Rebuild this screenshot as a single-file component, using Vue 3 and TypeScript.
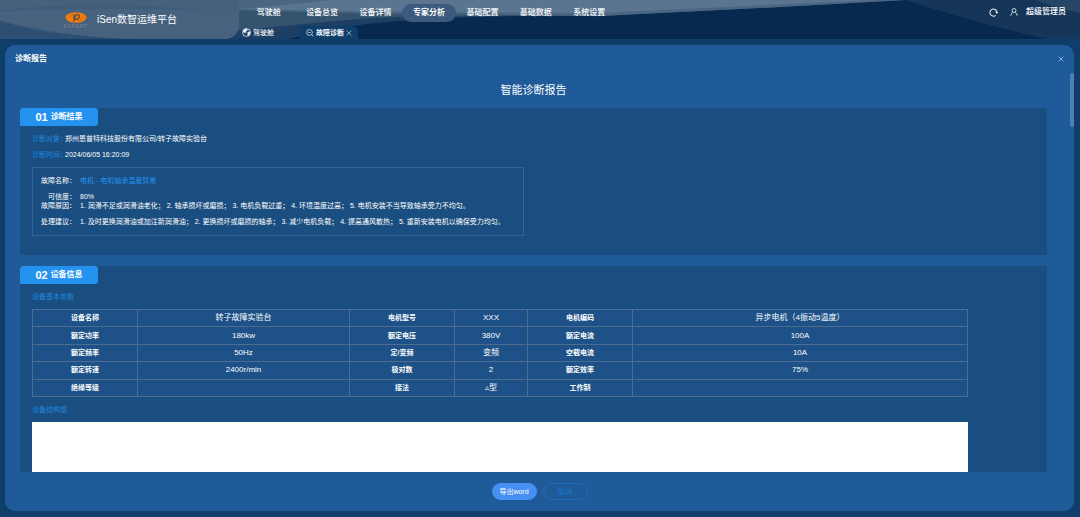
<script setup lang="ts">
import { ref } from 'vue'

const navItems: string[] = ['驾驶舱', '设备总览', '设备详情', '专家分析', '基础配置', '基础数据', '系统设置']
const activeNav = ref('专家分析')

interface Field {
  label: string
  value: string
  highlight?: boolean
  tight?: boolean
}

const summary: Field[] = [
  { label: '诊断对象：', value: '郑州恩普特科技股份有限公司/转子故障实验台' },
  { label: '诊断时间：', value: '2024/06/05 16:20:09' },
]

const faults: Field[] = [
  { label: '故障名称：', value: '电机 - 电机轴承温度异常', highlight: true },
  { label: '可信度：', value: '80%', tight: true },
  {
    label: '故障原因：',
    value: '1. 润滑不足或润滑油老化； 2. 轴承损坏或磨损； 3. 电机负载过重； 4. 环境温度过高； 5. 电机安装不当导致轴承受力不均匀。',
  },
  {
    label: '处理建议：',
    value: '1. 及时更换润滑油或加注新润滑油； 2. 更换损坏或磨损的轴承； 3. 减少电机负载； 4. 提高通风散热； 5. 重新安装电机以确保受力均匀。',
  },
]

const params: [string, string][][] = [
  [['设备名称', '转子故障实验台'], ['电机型号', 'XXX'], ['电机编码', '异步电机（4振动5温度）']],
  [['额定功率', '180kw'], ['额定电压', '380V'], ['额定电流', '100A']],
  [['额定频率', '50Hz'], ['定/变频', '变频'], ['空载电流', '10A']],
  [['额定转速', '2400r/min'], ['极对数', '2'], ['额定效率', '75%']],
  [['绝缘等级', ''], ['接法', '▵型'], ['工作制', '']],
]
</script>

<template>
  <div class="app">
    <header class="topbar">
      <svg class="waves" viewBox="0 0 1080 39" preserveAspectRatio="none" aria-hidden="true">
        <path d="M0 0H905L780 7L600 16Q480 15 400 21Q330 26 290 39H0Z" fill="#1d3f64" />
        <path d="M0 0H905L780 7L600 16Q460 15 370 18Q300 24 225 32V39H0Z" fill="#34536f" />
        <path d="M0 0H905L780 7L600 16Q500 15 420 14T240 10Q120 8 0 26Z" fill="#4a6682" />
        <path d="M330 0H880Q740 6 600 13Q420 13 240 9Q300 4 330 0Z" fill="#5b7590" />
        <path d="M905 0H1080V39H1045Q980 24 905 0Z" fill="#163659" />
        <path d="M1035 0H1080V13Q1056 8 1035 0Z" fill="#284766" />
      </svg>
      <div class="brand">
        <svg class="brand-bg" viewBox="0 0 239 39" preserveAspectRatio="none" aria-hidden="true">
          <rect width="239" height="39" fill="#3f5c7b" />
          <path d="M0 10Q110 -2 239 14V0H0Z" fill="#47617d" />
          <path d="M0 12Q60 8 140 9T239 13V39H130Q60 36 0 20Z" fill="#46627f" />
          <path d="M0 21Q50 36 130 39H0Z" fill="#2d4f72" />
        </svg>
        <div class="logo">
          <svg viewBox="0 0 22 11" width="22" height="11" aria-hidden="true">
            <ellipse cx="11" cy="5.5" rx="10.5" ry="5.2" fill="#f57c0a" />
            <ellipse cx="11.6" cy="5" rx="3" ry="2.2" transform="rotate(-25 11.6 5)" fill="none" stroke="#4b4a50" stroke-width="1.2" />
            <path d="M10.6 4.2L8.4 9.6" stroke="#4b4a50" stroke-width="1.2" />
            <path d="M4 6Q6 2.400 10.500 2.200M18.500 4.800Q17 8 12.500 8.600" fill="none" stroke="#8a5a30" stroke-width=".6" />
          </svg>
          <span class="logo-name">EXPERT</span>
        </div>
        <h1>iSen数智运维平台</h1>
      </div>

      <div class="menus">
        <nav class="nav">
          <button
            v-for="item in navItems"
            :key="item"
            type="button"
            :class="['nav-item', { active: item === activeNav }]"
            @click="activeNav = item"
          >{{ item }}</button>
        </nav>
        <div class="tabs">
          <a class="tab" href="#cockpit">
            <svg viewBox="0 0 16 16" width="9" height="9" aria-hidden="true">
              <circle cx="8" cy="8" r="7" fill="none" stroke="#e6edf4" stroke-width="1.5" />
              <path d="M2 4Q5 1 9 1.4L10 4L7 6L7.5 8L4.5 9L2 7ZM10 7L14.5 6L15 9Q13.5 13 10.5 14.5L9.5 11Z" fill="#e6edf4" />
            </svg>
            <span>驾驶舱</span>
          </a>
          <a class="tab current" href="#diagnosis">
            <svg viewBox="0 0 16 16" width="8" height="8" aria-hidden="true">
              <circle cx="7" cy="7" r="5.8" fill="none" stroke="#dce7f2" stroke-width="1.5" />
              <path d="M4.5 7H9.5M11.3 11.3L15 15" fill="none" stroke="#dce7f2" stroke-width="1.5" />
            </svg>
            <span>故障诊断</span>
            <svg viewBox="0 0 10 10" width="6" height="6" aria-hidden="true">
              <path d="M1 1L9 9M9 1L1 9" stroke="#a9bfd4" stroke-width="1.3" />
            </svg>
          </a>
        </div>
      </div>

      <div class="account">
        <button type="button" class="icon-btn" aria-label="刷新">
          <svg viewBox="0 0 16 16" width="9" height="9" aria-hidden="true">
            <path d="M12 13A6.4 6.4 0 1 1 14.2 7" fill="none" stroke="#e6edf4" stroke-width="1.8" />
            <path d="M10.5 6.5H16L14.5 10.5Z" fill="#e6edf4" />
          </svg>
        </button>
        <button type="button" class="user">
          <svg viewBox="0 0 16 16" width="8" height="8" aria-hidden="true">
            <circle cx="8" cy="5" r="4" fill="none" stroke="#e6edf4" stroke-width="1.7" />
            <path d="M1.5 15.5Q2 10.5 5.8 8.6M14.5 15.5Q14 10.5 10.2 8.6" fill="none" stroke="#e6edf4" stroke-width="1.7" />
          </svg>
          <span>超级管理员</span>
        </button>
      </div>
    </header>

    <section class="modal" role="dialog" aria-labelledby="modal-title">
      <header class="modal-head">
        <h2 id="modal-title">诊断报告</h2>
        <button type="button" class="icon-btn" aria-label="关闭">
          <svg viewBox="0 0 10 10" width="6" height="6" aria-hidden="true">
            <path d="M1 1L9 9M9 1L1 9" stroke="#a6c2df" stroke-width="1.3" />
          </svg>
        </button>
      </header>

      <div class="modal-main">
        <div class="report">
          <h2 class="report-title">智能诊断报告</h2>

          <section class="card">
            <h3 class="badge"><b>01</b>诊断结果</h3>
            <dl class="summary">
              <div v-for="f in summary" :key="f.label">
                <dt>{{ f.label }}</dt>
                <dd>{{ f.value }}</dd>
              </div>
            </dl>
            <dl class="faults">
              <div v-for="f in faults" :key="f.label" :class="{ tight: f.tight }">
                <dt>{{ f.label }}</dt>
                <dd :class="{ highlight: f.highlight }">{{ f.value }}</dd>
              </div>
            </dl>
          </section>

          <section class="card">
            <h3 class="badge"><b>02</b>设备信息</h3>
            <h4>设备基本参数</h4>
            <table>
              <colgroup>
                <col class="c-label" /><col class="c-first" />
                <col class="c-label" /><col class="c-mid" />
                <col class="c-label" /><col />
              </colgroup>
              <tbody>
                <tr v-for="(row, i) in params" :key="i">
                  <template v-for="[name, value] in row" :key="name">
                    <th scope="row">{{ name }}</th>
                    <td>{{ value }}</td>
                  </template>
                </tr>
              </tbody>
            </table>
            <h4>设备结构图</h4>
            <div class="diagram"></div>
          </section>
        </div>
        <div class="track"><div class="thumb"></div></div>
      </div>

      <footer class="modal-foot">
        <button type="button" class="btn primary">导出word</button>
        <button type="button" class="btn">取消</button>
      </footer>
    </section>
  </div>
</template>

<style>
body {
  margin: 0;
  background: #0f3e6b;
}
</style>

<style scoped>
.app {
  display: flex;
  flex-direction: column;
  height: 100vh;
  overflow: hidden;
  background: #0f3e6b;
  color: #fff;
  font-family: "Liberation Sans", "Noto Sans CJK SC", sans-serif;
  font-size: 7px;
  line-height: 10px;
}
h1, h2, h3, h4, dl, dd {
  margin: 0;
}
button {
  padding: 0;
  border: 0;
  background: none;
  color: inherit;
  font: inherit;
  cursor: pointer;
}
a {
  color: inherit;
  text-decoration: none;
}
svg {
  display: block;
  flex: none;
}

.topbar {
  position: relative;
  display: flex;
  flex: none;
  height: 39px;
  background: #07284f;
}
.waves, .brand-bg {
  position: absolute;
  inset: 0;
  width: 100%;
  height: 100%;
}
.brand {
  position: relative;
  display: flex;
  align-items: center;
  gap: 8px;
  width: 239px;
  padding: 1px 0 0 62px;
  box-sizing: border-box;
  border-radius: 0 0 14px 0;
  overflow: hidden;
}
.logo {
  position: relative;
  display: flex;
  flex-direction: column;
  align-items: center;
  gap: 1px;
  width: 27px;
}
.logo-name {
  color: #76808d;
  font-size: 6px;
  line-height: 5px;
}
.brand h1 {
  position: relative;
  font-size: 10px;
  font-weight: 400;
  line-height: 14px;
}
.menus {
  position: relative;
  flex: 1;
  padding-left: 3px;
}
.nav {
  display: grid;
  grid-template-columns: repeat(7, 1fr);
  width: 374px;
  padding: 4px 0;
}
.nav-item {
  height: 18px;
  border-radius: 9px;
  font-size: 8px;
  font-weight: 500;
}
.nav-item.active {
  background: #3c5b7c;
  font-weight: 700;
}
.tabs {
  display: flex;
  gap: 20px;
}
.tab {
  display: flex;
  align-items: center;
  gap: 2px;
  height: 13px;
  padding: 0 6px 0 0;
  font-weight: 500;
}
.tab.current {
  padding: 0 6px;
  border-radius: 6px 6px 0 0;
  background: #0f3e6b;
  font-weight: 700;
}
.account {
  position: relative;
  display: flex;
  align-items: center;
  gap: 12px;
  height: 24px;
  padding-right: 14px;
}
.user {
  display: flex;
  align-items: center;
  gap: 8px;
  font-size: 8px;
  font-weight: 500;
}

.modal {
  display: flex;
  flex: 1;
  flex-direction: column;
  min-height: 0;
  margin: 6px 6px 6px 5px;
  border-radius: 10px;
  background: #1f5b98;
}
.modal-head {
  display: flex;
  align-items: center;
  justify-content: space-between;
  height: 28px;
  padding: 0 10px;
}
.modal-head h2 {
  font-size: 8px;
}
.modal-main {
  display: flex;
  flex: 1;
  min-height: 0;
}
.report {
  flex: 1;
  padding-left: 15px;
  overflow-y: auto;
  scrollbar-width: none;
}
.track {
  display: flex;
  justify-content: flex-end;
  width: 27px;
}
.thumb {
  width: 4px;
  height: 54px;
  border-radius: 2px;
  background: #4f80b3;
}
.report-title {
  font-size: 11px;
  font-weight: 400;
  line-height: 35px;
  text-align: center;
}
.card {
  margin-bottom: 11px;
  padding: 0 79px 19px 12px;
  background: #1b4e80;
}
.badge {
  display: flex;
  align-items: center;
  justify-content: center;
  gap: 3px;
  width: 78px;
  height: 18px;
  margin-left: -12px;
  border-radius: 3px 3px 3px 0;
  background: #2493ef;
  font-size: 8px;
}
.badge b {
  font-size: 11px;
}
.summary {
  padding: 8px 0 7px;
}
.summary > div, .faults > div {
  display: flex;
  white-space: nowrap;
}
.summary > div + div {
  margin-top: 6px;
}
.summary dt {
  width: 33px;
  color: #1f86de;
}
.faults {
  display: flex;
  flex-direction: column;
  gap: 6px;
  width: 492px;
  max-width: 100%;
  padding: 8px;
  box-sizing: border-box;
  border: 1px solid #2f6698;
}
.faults > div {
  gap: 4px;
}
.faults > .tight {
  margin-bottom: -7px;
}
.faults dt {
  width: 35px;
  text-align: right;
}
.highlight {
  color: #2493ef;
}
h4 {
  padding: 8px 0 7px;
  color: #1f86de;
  font-weight: 400;
}
table {
  width: 100%;
  height: 88px;
  border-collapse: collapse;
  table-layout: fixed;
  background: #1d5187;
}
.c-label {
  width: 105px;
}
.c-first {
  width: 212px;
}
.c-mid {
  width: 73px;
}
th, td {
  padding: 0;
  border: 1px solid #4c6d8e;
  text-align: center;
}
td {
  font-size: 8px;
}
.diagram {
  height: 240px;
  background: #fff;
}
.modal-foot {
  display: flex;
  align-items: center;
  justify-content: center;
  gap: 6px;
  height: 39px;
}
.btn {
  width: 45px;
  height: 17px;
  box-sizing: border-box;
  border: 1px solid #1a6bba;
  border-radius: 9px;
  color: #1a77cf;
}
.btn.primary {
  border-color: #478ff0;
  background: #478ff0;
  color: #fff;
}
</style>
